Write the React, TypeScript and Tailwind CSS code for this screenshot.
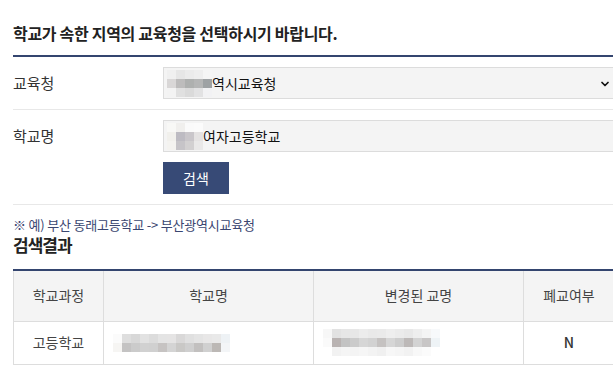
import { ChevronDown } from "lucide-react"

const FONT = { fontFamily: '"Noto Sans CJK KR", "Noto Sans", sans-serif' }

// 모자이크 처리된 영역 흉내
function Mosaic({ rows }: { rows: string[][] }) {
  return (
    <div className="flex flex-col">
      {rows.map((row, i) => (
        <div key={i} className="flex">
          {row.map((c, j) => (
            <div key={j} className="h-[9px] w-[9px]" style={{ background: c }} />
          ))}
        </div>
      ))}
    </div>
  )
}

export default function App() {
  return (
    <div className="h-[381px] w-[613px] overflow-hidden bg-white text-[#222]" style={FONT}>
      <div className="ml-[13px] w-[602px]">
        {/* 안내 타이틀 */}
        <div className="h-[57px] border-b-2 border-[#34456f] pt-[21px]">
          <h2 className="text-[16px] leading-[24px] font-bold tracking-[-0.3px] text-[#222]">
            학교가 속한 지역의 교육청을 선택하시기 바랍니다.
          </h2>
        </div>

        {/* 교육청 */}
        <div className="flex h-[53px] items-center border-b border-[#e8e8e8]">
          <div className="w-[150px] text-[15px] text-[#333]">교육청</div>
          <div className="relative flex h-[32px] flex-1 items-center border border-[#dcdcdc] bg-[#f4f4f4] pl-[3px] text-[14px] text-[#111]">
            <Mosaic
              rows={[
                ["#f0f0f0", "#e6e6e6", "#ebebeb", "#eeeeee", "#f5f5f5"],
                ["#d9d7d7", "#bdbcbc", "#aeb0af", "#b5b6b6", "#9ea2a4"],
                ["#f3f3f3", "#e0e0e0", "#dadada", "#e2e2e3", "#f2f2f4"],
              ]}
            />
            <span>역시교육청</span>
            <ChevronDown className="absolute right-[3px] top-[10px] h-[12px] w-[12px] text-[#111]" strokeWidth={3.5} />
          </div>
        </div>

        {/* 학교명 */}
        <div className="flex border-b border-[#e8e8e8] pt-[10px] pb-[10px]">
          <div className="flex h-[32px] w-[150px] items-center text-[15px] text-[#333]">학교명</div>
          <div className="flex flex-1 flex-col gap-[10px]">
            <div className="flex h-[32px] items-center border border-[#dcdcdc] bg-[#f4f4f4] pl-[3px] text-[14px] text-[#111]">
              <Mosaic
                rows={[
                  ["#f8f8f6", "#f0efed", "#fafafa", "#fbfbfb"],
                  ["#f1f0ec", "#bdbbc2", "#c9c6ca", "#e4e2e2"],
                  ["#f4f3f0", "#c6c4c8", "#d2d0d1", "#e9e8e8"],
                ]}
              />
              <span>여자고등학교</span>
            </div>
            <button className="h-[32px] w-[66px] bg-[#374a76] text-[14px] text-white">검색</button>
          </div>
        </div>

        <p className="mt-[11px] text-[13px] leading-[18px] tracking-[-0.2px] text-[#3a4670]">
          ※ 예) 부산 동래고등학교 -&gt; 부산광역시교육청
        </p>
        <h3 className="mt-[1px] text-[17px] leading-[20px] font-bold tracking-[-1px] text-[#222]">검색결과</h3>

        {/* 결과 테이블 */}
        <table className="mt-[14px] w-[602px] table-fixed border-collapse border-t-2 border-[#34456f] text-[14px] text-[#444]">
          <colgroup>
            <col className="w-[90px]" />
            <col className="w-[210px]" />
            <col className="w-[210px]" />
            <col />
          </colgroup>
          <thead>
            <tr className="h-[51px] bg-[#f4f4f4]">
              <th className="border border-[#dddddd] font-normal">학교과정</th>
              <th className="border border-[#dddddd] font-normal">학교명</th>
              <th className="border border-[#dddddd] font-normal">변경된 교명</th>
              <th className="border border-[#dddddd] font-normal">폐교여부</th>
            </tr>
          </thead>
          <tbody>
            <tr className="h-[43px]">
              <td className="border border-[#dddddd] text-center">고등학교</td>
              <td className="border border-[#dddddd] pl-[9px]">
                <Mosaic
                  rows={[
                    ["#fbfbfb", "#dedede", "#d8d8d8", "#e2e2e2", "#dcdcdc", "#e4e4e4", "#e5e4e4", "#d9d8d8", "#e0e0e0", "#e4e4e4", "#e8e7e7", "#e9e9e9", "#eef2f5"],
                    ["#f6f5f3", "#c4c3c3", "#cbcbcb", "#d1d1d1", "#d0d0d0", "#c6c3c2", "#d4d4d4", "#c9c8c6", "#cfcfcf", "#c2c0bf", "#d0d0d0", "#bcb8b5", "#f3f5f7"],
                  ]}
                />
              </td>
              <td className="border border-[#dddddd] pl-[9px]">
                <Mosaic
                  rows={[
                    ["#f7f7f7", "#e2e2e2", "#e6e6e6", "#e7e7e7", "#ececec", "#e9e9e9", "#eaeaea", "#eeeeee", "#ebebeb", "#e8e8e8", "#eeeeee", "#f4f4f4", "#f7f9fb"],
                    ["#fafafa", "#b9b3b2", "#c3c3c3", "#cbcbcb", "#d6d6d6", "#d2d2d2", "#c5c2c1", "#d6d6d6", "#cdcdcd", "#bdb9b8", "#d3d3d3", "#c8c6c6", "#eef3f6"],
                    ["#ffffff", "#f2f2f2", "#f5f5f5", "#f4f4f4", "#f6f6f6", "#f3f3f3", "#f0f0f0", "#f7f7f7", "#f5f5f5", "#f2f2f2", "#f8f8f8", "#fbfbfb", "#ffffff"],
                  ]}
                />
              </td>
              <td className="border border-[#dddddd] text-center font-medium text-[#333]">N</td>
            </tr>
          </tbody>
        </table>
      </div>
    </div>
  )
}
